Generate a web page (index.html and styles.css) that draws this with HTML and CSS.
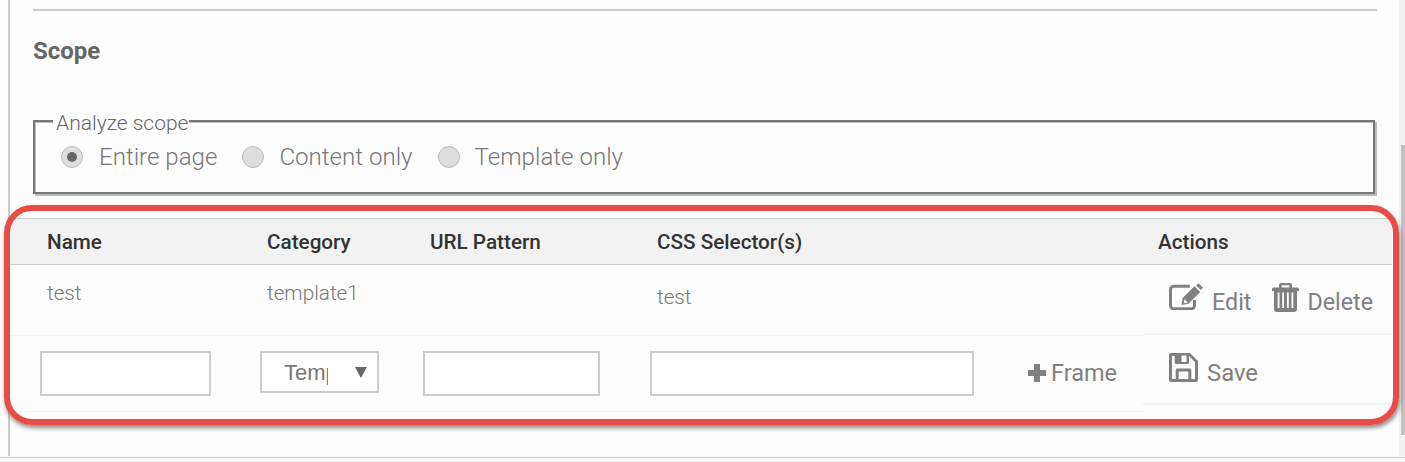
FILE: index.html
```html
<!DOCTYPE html>
<html lang="en">
<head>
<meta charset="utf-8">
<title>Scope</title>
<link rel="stylesheet" href="styles.css">
</head>
<body>
<div class="page">
  <div class="viewport">
    <main class="frame">
      <hr class="rule">
      <h2 class="heading">Scope</h2>
      <fieldset class="scope">
        <legend>Analyze scope</legend>
        <div class="radios">
          <span class="radio"><i class="dot on"></i>Entire page</span>
          <span class="radio"><i class="dot"></i>Content only</span>
          <span class="radio"><i class="dot"></i>Template only</span>
        </div>
      </fieldset>
      <section class="table">
        <div class="thead">
          <div class="th name">Name</div>
          <div class="th cat">Category</div>
          <div class="th url">URL Pattern</div>
          <div class="th css">CSS Selector(s)</div>
          <div class="th act">Actions</div>
        </div>
        <div class="tbody">
          <div class="main-col">
            <div class="row data">
              <div class="name">test</div>
              <div class="cat">template1</div>
              <div class="url"></div>
              <div class="css low">test</div>
            </div>
            <div class="row form">
              <input class="field w-name" type="text">
              <div class="select-wrap"><select class="select"><option>Template</option></select><span class="caret"></span></div>
              <input class="field w-url" type="text">
              <div class="css-cell">
                <input class="field w-css" type="text">
                <span class="frame-btn"><svg class="ic-plus" viewBox="0 0 18 18"><path d="M6 0h6v6h6v6h-6v6H6v-6H0V6h6z"/></svg>Frame</span>
              </div>
            </div>
          </div>
          <div class="act-col">
            <div class="act-row first">
              <span class="action"><svg class="ic-edit" viewBox="0 0 34 27"><path class="line" d="M25.500 17v5.500a3.300 3.300 0 0 1-3.300 3.300H4.800a3.300 3.300 0 0 1-3.300-3.300V6.500a3.300 3.300 0 0 1 3.300-3.300h16"/><path fill-rule="evenodd" d="M12.300 22l1.400-7L25.500 3.300l5.700 5.700L19.500 20.700zM15.500 16.200l-.7 3.100 .9 .9 3.100-.7z"/><path d="M27 2.500L29.500 .2 34 4.700 31.800 7z"/></svg><span class="label">Edit</span></span>
              <span class="action del"><svg class="ic-trash" viewBox="0 0 27 29"><path fill-rule="evenodd" d="M9 0h9a2 2 0 0 1 2 2v2.500h5.500a1.500 1.500 0 0 1 1.500 1.500v2h-2v18a3 3 0 0 1-3 3H5a3 3 0 0 1-3-3V8H0V6a1.500 1.500 0 0 1 1.500-1.500H7V2a2 2 0 0 1 2-2zm.7 2.300v2.200h7.600V2.300zM5.700 9.500v15.500h1.800V9.500zM10.200 9.500v15.500H12V9.500zM15 9.500v15.500h1.800V9.500zM19.500 9.500v15.500h1.800V9.500z"/></svg><span class="label">Delete</span></span>
            </div>
            <div class="act-row second">
              <span class="action"><svg class="ic-save" viewBox="0 0 29 29"><path fill-rule="evenodd" d="M2.300 0H21l8 8v18.700a2.300 2.300 0 0 1-2.300 2.300H2.300A2.300 2.300 0 0 1 0 26.700V2.300A2.300 2.300 0 0 1 2.300 0zM3 3v23h3.700V17a1.500 1.500 0 0 1 1.500-1.500h12.600a1.500 1.500 0 0 1 1.500 1.500v9H26V9.300L20 3v6.500a1.500 1.500 0 0 1-1.500 1.500H7.200a1.500 1.500 0 0 1-1.500-1.500V3zm6.700 15.500V26h9.600v-7.500zM12.500 2.500V9h5V2.500z"/></svg><span class="label">Save</span></span>
            </div>
          </div>
        </div>
      </section>
    </main>
    <div class="scrollbar"><div class="thumb"></div></div>
  </div>
  <div class="bottom"></div>
  <div class="callout"></div>
</div>
</body>
</html>
```
FILE: styles.css
```css
* { box-sizing: border-box; }
html, body { margin: 0; padding: 0; }
body { background: #fdfdfd; font-family: Roboto, "Liberation Sans", sans-serif; overflow: hidden; }
.page { position: relative; width: 1405px; height: 462px; display: flex; flex-direction: column; }
.viewport { height: 456px; display: flex; justify-content: space-between; }
.frame { width: 1384px; margin-left: 8px; border-left: 2px solid #ccc; }
.rule { margin: 9px 15px 0 23px; height: 2px; border: 0; background: #ccc; }
.heading { margin: 26px 0 0 23px; height: 29px; font-size: 24px; line-height: 29px; font-weight: 700; color: #666; }
.scope { margin: 41px 17px 0 23px; padding: 0 0 0 26px; height: 87px; border: 2px solid #777; box-shadow: 2px 2px 0 #bbb, inset 1px 1px 0 #bbb; min-width: 0; }
.scope legend { margin-left: -8px; padding: 6px 1px 0 3px; font-size: 21px; line-height: 21px; font-weight: 300; color: #666; background: linear-gradient(transparent 8px, #fdfdfd 8px); }
.radios { display: flex; gap: 25px; margin-top: 7px; }
.radio { display: flex; align-items: center; gap: 15px; font-size: 24.100px; line-height: 32px; font-weight: 300; color: #777; }
.dot { width: 22px; height: 22px; border-radius: 50%; background: #dedede; border: 1px solid #bbb; display: flex; align-items: center; justify-content: center; }
.dot.on { margin-right: 1px; }
.dot.on::after { content: ""; width: 10px; height: 10px; border-radius: 50%; background: #666; }
.table { margin-top: 24px; }
.thead { height: 47px; background: #f2f2f2; border-top: 1px solid #ccc; border-bottom: 1px solid #ccc; display: grid; grid-template-columns: 220px 163px 227px 493px 249px; padding-left: 30px; }
.th { padding: 1px 0 0 7px; font-size: 20.700px; line-height: 44px; font-weight: 500; color: #333; }
.th.act { padding-left: 15px; }
.tbody { display: flex; }
.main-col { width: 1133px; }
.row { display: grid; grid-template-columns: 220px 163px 227px 493px; padding-left: 30px; border-bottom: 1px solid #f3f3f3; }
.data { height: 71px; font-size: 20.700px; font-weight: 300; color: #777; line-height: 24px; padding-top: 16px; }
.data > div { padding-left: 7px; }
.data .low { padding-top: 4px; }
.form { height: 76px; padding-top: 15px; }
.field { height: 45px; border: 2px solid #ccc; background: #fff; padding: 0; display: block; }
.w-name { width: 171px; }
.w-url { width: 177px; }
.w-css { width: 324px; }
.select-wrap { position: relative; width: 119px; height: 42px; }
.select { appearance: none; width: 119px; height: 42px; border: 2px solid #ccc; border-radius: 0; background: #fff; padding: 0 49px 0 22px; font-family: "Liberation Sans", Arial, sans-serif; font-size: 22px; color: #777; }
.caret { position: absolute; left: 95px; top: 16px; width: 0; height: 0; border-left: 6px solid transparent; border-right: 6px solid transparent; border-top: 11px solid #666; }
.css-cell { display: flex; align-items: flex-start; height: 45px; }
.frame-btn { display: flex; align-items: center; margin: 7px 0 0 54px; font-size: 23.500px; color: #808080; line-height: 30px; gap: 5px; }
.ic-plus { width: 18px; height: 18px; fill: #808080; }
.act-col { width: 249px; }
.act-row { padding-left: 26px; display: flex; border-bottom: 2px solid #f3f3f3; }
.first { height: 70px; padding-top: 18px; }
.second { height: 70px; padding-top: 18px; }
.action { display: flex; align-items: flex-start; font-size: 23.300px; color: #808080; }
.second .action { font-size: 23.800px; }
.action svg { fill: #808080; flex: none; }
.label { line-height: 34px; }
.first .label { padding-top: 2px; }
.second .label { padding-top: 3px; }
.line { fill: none; stroke: #808080; stroke-width: 3; }
.ic-edit { width: 34px; height: 27px; margin-right: 9px; }
.ic-trash { width: 27px; height: 29px; margin-right: 8px; }
.ic-save { width: 29px; height: 29px; margin-right: 9px; }
.del { margin-left: 21px; }
.scrollbar { width: 6px; background: #f1f1f1; padding: 145px 0 0 2px; }
.thumb { width: 4px; height: 290px; background: #c1c1c1; }
.bottom { flex: 1; border-top: 1px solid #ccc; background: #f6f6f6; margin-top: 1px; }
.callout { position: absolute; left: 4px; top: 205px; width: 1395px; height: 220px; border: 6px solid #e84c47; border-radius: 28px; box-shadow: 1px 3px 4px rgba(0,0,0,.45); }
```
